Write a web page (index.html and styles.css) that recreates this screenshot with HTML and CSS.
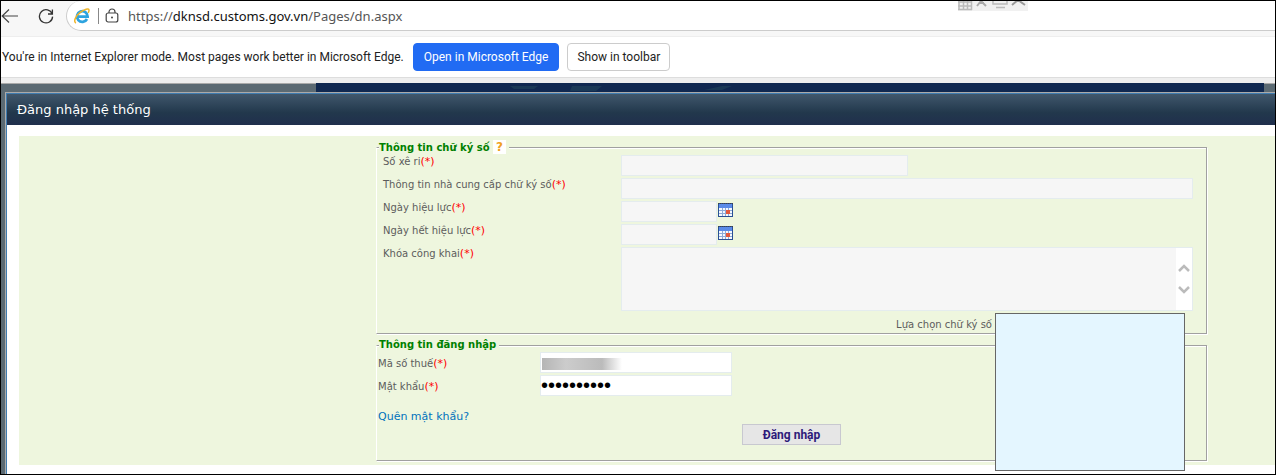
FILE: index.html
```html
<!DOCTYPE html>
<html lang="vi">
<head>
    <meta charset="UTF-8">
    <meta name="viewport" content="width=device-width, initial-scale=1.0">
    <title>Đăng nhập hệ thống</title>
    <link rel="stylesheet" href="styles.css">
</head>
<body>
    <div class="window">
        <div class="toolbar">
            <button type="button" class="nav" aria-label="Back">
                <svg width="18" height="16" viewBox="0 0 18 16"><path d="M17 8H1M8 1.5L1.2 8L8 14.5" fill="none" stroke="#444" stroke-width="1.2"/></svg>
            </button>
            <button type="button" class="nav" aria-label="Refresh">
                <svg width="16" height="16" viewBox="0 0 16 16"><path d="M14.2 6A6.6 6.6 0 1 0 14.6 8.6M14.4 1.5V6H10" fill="none" stroke="#333" stroke-width="1.3"/></svg>
            </button>
            <div class="address">
                <svg width="16" height="16" viewBox="0 0 16 16">
                    <path d="M13 11A5.300 5.300 0 1 1 13.600 8.600H4.500" fill="none" stroke="#2da3df" stroke-width="2.800"/>
                    <path d="M2 15C-1 14 1.500 8 6.500 4.200C10.500 1 14.500 0 15 2C15.200 3 14.600 4 14.200 4.800" fill="none" stroke="#efb52c" stroke-width="1.500"/>
                </svg>
                <span class="divider"></span>
                <svg width="14" height="16" viewBox="0 0 14 16"><rect x="1.200" y="5" width="11.600" height="9" rx="2" fill="none" stroke="#444" stroke-width="1.200"/><path d="M4 5V4a3 3 0 0 1 6 0V5" fill="none" stroke="#444" stroke-width="1.200"/><circle cx="7" cy="9.500" r="1" fill="#444"/></svg>
                <span class="url">https://<b>dknsd.customs.gov.vn</b>/Pages/dn.aspx</span>
            </div>
            <svg class="tray" width="70" height="10" viewBox="0 0 70 10">
                <rect width="70" height="10" fill="#f1f1f1"/>
                <path d="M1 0V9M5.500 0V9M9.500 0V9M13.500 0V9M0 1H14M0 5H14M0 8.500H14" stroke="#bbb" stroke-width="1.500"/>
                <path d="M19 5L23 0L28 5M21 2h5" fill="none" stroke="#aaa" stroke-width="2"/>
                <path d="M35 0V3H49V0M38 6.500h9" fill="none" stroke="#bbb" stroke-width="1.500"/>
                <path d="M54 4L60 -1L67 4" fill="none" stroke="#999" stroke-width="2"/>
            </svg>
        </div>
        <div class="infobar">
            <span>You're in Internet Explorer mode. Most pages work better in Microsoft Edge.</span>
            <button type="button" class="btn primary">Open in Microsoft Edge</button>
            <button type="button" class="btn">Show in toolbar</button>
        </div>
        <div class="page">
            <div class="banner">
                <svg width="230" height="8" viewBox="0 0 230 8"><path d="M0 2h28l-4 3H4zM62 2h30l-6 5H60zM194 6l18-4h10l-10 4z" fill="#1a3956"/></svg>
            </div>
            <div class="dialog">
                <h1 class="title">Đăng nhập hệ thống</h1>
                <form class="pane">
                    <fieldset class="group">
                        <legend>Thông tin chữ ký số <span class="help">?</span></legend>
                        <div class="row">
                            <label for="serial">Số xê ri<i>(*)</i></label>
                            <input id="serial" class="medium" type="text" readonly>
                        </div>
                        <div class="row">
                            <label for="vendor">Thông tin nhà cung cấp chữ ký số<i>(*)</i></label>
                            <input id="vendor" class="wide" type="text" readonly>
                        </div>
                        <div class="row">
                            <label for="from">Ngày hiệu lực<i>(*)</i></label>
                            <input id="from" class="date" type="text" readonly>
                            <svg class="calendar" width="15" height="14" viewBox="0 0 15 14"><rect width="15" height="14" fill="#2a4f94"/><rect x="1" y="1" width="13" height="4" fill="#5b8be8"/><rect x="1" y="5" width="13" height="8" fill="#f4f8ff"/><path d="M4.500 5v8M7.500 5v8M10.500 5v8M1 7.500h13M1 10.500h13" stroke="#8eabd8"/><path d="M0 .5h15" stroke="#444" stroke-dasharray="1 1"/><rect x="8" y="7" width="4" height="4" fill="#e2583e"/></svg>
                        </div>
                        <div class="row">
                            <label for="to">Ngày hết hiệu lực<i>(*)</i></label>
                            <input id="to" class="date" type="text" readonly>
                            <svg class="calendar" width="15" height="14" viewBox="0 0 15 14"><rect width="15" height="14" fill="#2a4f94"/><rect x="1" y="1" width="13" height="4" fill="#5b8be8"/><rect x="1" y="5" width="13" height="8" fill="#f4f8ff"/><path d="M4.500 5v8M7.500 5v8M10.500 5v8M1 7.500h13M1 10.500h13" stroke="#8eabd8"/><path d="M0 .5h15" stroke="#444" stroke-dasharray="1 1"/><rect x="8" y="7" width="4" height="4" fill="#e2583e"/></svg>
                        </div>
                        <div class="row">
                            <label for="key">Khóa công khai<i>(*)</i></label>
                            <div class="keybox">
                                <textarea id="key" readonly></textarea>
                                <div class="scroll">
                                    <svg width="12" height="32" viewBox="0 0 12 32"><path d="M1 8L6 3L11 8M1 24L6 29L11 24" fill="none" stroke="#bbb" stroke-width="2.500"/></svg>
                                </div>
                            </div>
                        </div>
                        <div class="choose">
                            <label for="cert">Lựa chọn chữ ký số</label>
                            <div class="anchor"><select id="cert" size="8"></select></div>
                        </div>
                    </fieldset>
                    <fieldset class="group login">
                        <legend>Thông tin đăng nhập</legend>
                        <div class="row">
                            <label for="tax">Mã số thuế<i>(*)</i></label>
                            <div class="masked"><input id="tax" type="text"></div>
                        </div>
                        <div class="row">
                            <label for="pass">Mật khẩu<i>(*)</i></label>
                            <input id="pass" type="password" value="aaaaaaaaaa">
                        </div>
                        <a class="forgot" href="#">Quên mật khẩu?</a>
                        <button type="submit" class="submit">Đăng nhập</button>
                    </fieldset>
                </form>
            </div>
        </div>
    </div>
</body>
</html>
```
FILE: styles.css
```css
* {
    box-sizing: border-box;
    margin: 0;
    padding: 0;
}
body {
    font-family: "DejaVu Sans", Verdana, sans-serif;
    font-size: 10px;
    color: #5c5c5c;
}
button, input, textarea, select {
    font-family: inherit;
}
.window {
    display: flex;
    flex-direction: column;
    min-height: 100vh;
    border: 1px solid #000;
}

/* browser bars */
.toolbar {
    position: relative;
    display: flex;
    height: 36px;
    padding-bottom: 5px;
    background: #f7f7f7;
    border-bottom: 1px solid #eee;
}
.nav {
    display: flex;
    align-items: center;
    width: 37px;
    border: 0;
    background: none;
}
.nav + .nav {
    width: 28px;
}
.address {
    flex: 1;
    display: flex;
    align-items: center;
    padding-left: 7px;
    background: #fff;
    border: 1px solid #ccc;
    border-width: 0 0 1px 1px;
    border-radius: 16px 0 0 16px;
}
.divider {
    width: 1px;
    height: 16px;
    margin: 0 6px 0 8px;
    background: #888;
}
.url {
    margin-left: 9px;
    font: 13px/20px "Noto Sans", "Segoe UI", sans-serif;
    color: #555;
}
.url b {
    font-weight: normal;
    color: #111;
}
.tray {
    position: absolute;
    top: 0;
    right: 247px;
}
.infobar {
    display: flex;
    align-items: center;
    height: 41px;
    padding-left: 1px;
    background: #fff;
    border-bottom: 1px solid #ddd;
    font: 12px/16px Roboto, "Segoe UI", sans-serif;
    color: #222;
}
.btn {
    height: 28px;
    margin-left: 8px;
    padding: 0 9px;
    border: 1px solid #ccc;
    border-radius: 4px;
    background: #fff;
    color: #222;
    font-size: 12px;
}
.btn.primary {
    margin-left: 9px;
    padding: 0 10px;
    border-color: #216bf3;
    background: #216bf3;
    color: #fff;
}

/* page */
.page {
    flex: 1;
    display: flex;
    flex-direction: column;
    padding-left: 4px;
    border-top: 5px solid #eee;
    background: #5b6a73;
    box-shadow: inset 0 1px #aaa;
}
.banner {
    height: 9px;
    padding-left: 194px;
    margin: 0 11px 0 311px;
    background: #102850;
}
.dialog {
    flex: 1;
    border: 1px solid #aaa;
    border-width: 1px 0 0 1px;
    background: #fff;
    box-shadow: inset 1px 1px #3f7cb0;
    padding: 1px 0 9px 1px;
}
.title {
    height: 31px;
    padding-left: 10px;
    background: linear-gradient(#40576c, #22384c 60%, #202f4d);
    color: #fff;
    font-size: 13px;
    font-weight: normal;
    line-height: 31px;
}
.pane {
    margin: 11px 0 0 12px;
    padding: 4px 68px 4px 357px;
    background: #eef6de;
}
.group {
    min-width: 0;
    padding: 0 13px 2px 6px;
    border: 1px solid #a0a0a0;
    border-left-color: #fff;
    box-shadow: 1px 1px #fff, inset 0 1px #fff;
}
.group legend {
    margin-left: -4px;
    padding-right: 3px;
    background: #eef6de;
    color: #008000;
    font-size: 10px;
    font-weight: bold;
    line-height: 14px;
}
.help {
    display: inline-block;
    padding: 0 3px;
    background: #fff;
    color: #f0a020;
    font-size: 12px;
}
.row {
    display: flex;
    margin-top: 2px;
}
legend + .row {
    margin-top: 0;
}
.row label {
    width: 238px;
    padding-top: 1px;
    line-height: 12px;
}
.row i {
    font-size: 11px;
    font-style: normal;
    color: #f00;
}
.row input {
    height: 21px;
    border: 1px solid #e4ecee;
    background: #f6f6f6;
}
.row .medium {
    width: 287px;
}
.row .wide {
    flex: 1;
}
.row .date {
    width: 96px;
}
.calendar {
    margin: 2px 0 0 1px;
}
.keybox {
    position: relative;
    flex: 1;
    height: 64px;
}
.keybox textarea {
    width: 100%;
    height: 100%;
    border: 1px solid #e4ecee;
    background: #f6f6f6;
    resize: none;
}
.scroll {
    position: absolute;
    top: 1px;
    right: 1px;
    bottom: 1px;
    display: flex;
    align-items: center;
    padding: 0 2px;
    background: #fff;
}
.choose {
    display: flex;
    justify-content: flex-end;
    padding: 8px 198px 0 0;
    line-height: 12px;
}
.anchor {
    position: relative;
    width: 3px;
}
.anchor select {
    position: absolute;
    top: -6px;
    left: 3px;
    z-index: 1;
    width: 190px;
    height: 158px;
    border: 1px solid #666;
    border-radius: 0;
    background: #e4f6ff;
}

/* login */
.login {
    margin-top: 4px;
    padding: 0 1px 15px 1px;
}
.login legend {
    margin-left: 1px;
}
.login label {
    width: 162px;
    padding-top: 6px;
}
.login input {
    width: 192px;
    background: #fff;
    color: #000;
}
.login input[type="password"] {
    font-family: "Liberation Sans", Arial, sans-serif;
    font-size: 20px;
}
.masked {
    position: relative;
}
.masked::after {
    content: "";
    position: absolute;
    top: 6px;
    left: 2px;
    width: 80px;
    height: 12px;
    background: linear-gradient(90deg, #b5b5b5, #ccc 30%, #bbb 75%, #fff);
}
.forgot {
    display: block;
    margin-top: 14px;
    color: #0072bc;
    font-size: 11px;
    line-height: 14px;
    text-decoration: none;
}
.submit {
    display: block;
    width: 99px;
    height: 21px;
    margin: 0 auto;
    border: 1px solid #c8c8d0;
    background: #e6e6e6;
    color: #2e1a7a;
    font: bold 12px Roboto, Arial, sans-serif;
}
```
